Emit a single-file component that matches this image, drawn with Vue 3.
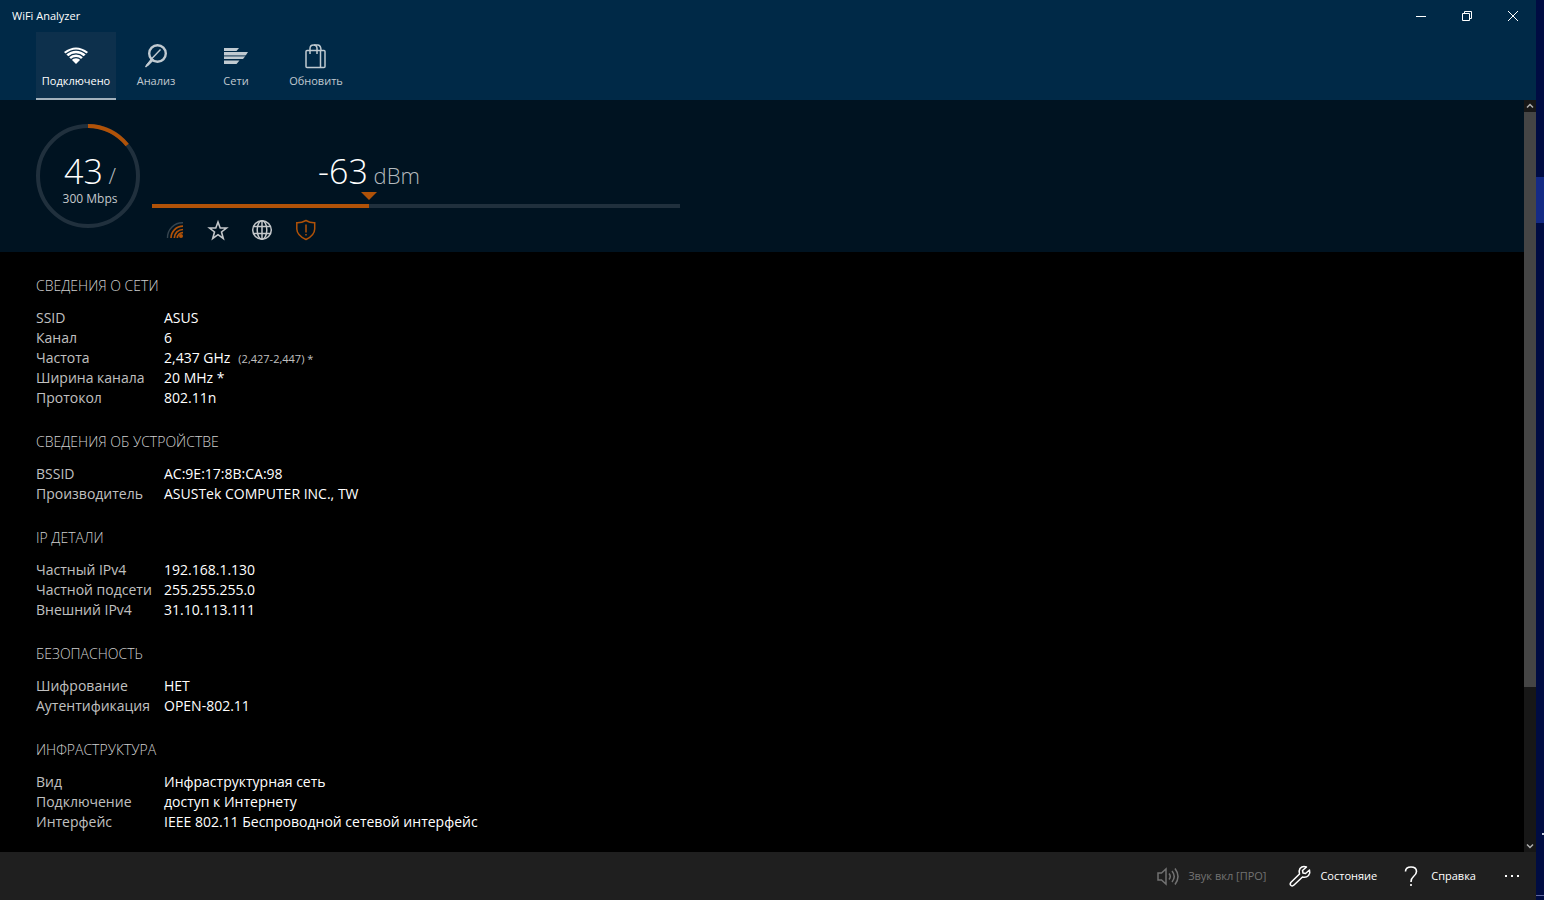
<template>
  <div class="desktop">
    <div class="window">
      <header class="header">
        <div class="title-bar">
          <h1 class="app-title">WiFi Analyzer</h1>
          <div class="window-controls">
            <button type="button" aria-label="Свернуть">
              <svg width="10" height="10" viewBox="0 0 10 10"><path d="M0 5.5h10" /></svg>
            </button>
            <button type="button" aria-label="Восстановить">
              <svg width="10" height="10" viewBox="0 0 10 10">
                <path d="M.5 2.5h7v7h-7zM2.5 2.5v-2h7v7h-2" />
              </svg>
            </button>
            <button type="button" aria-label="Закрыть">
              <svg width="10" height="10" viewBox="0 0 10 10"><path d="M0 0l10 10M10 0L0 10" /></svg>
            </button>
          </div>
        </div>

        <nav class="tabs">
          <button
            v-for="tab in tabs"
            :key="tab.id"
            type="button"
            class="tab"
            :class="{ active: tab.id === activeTab }"
            @click="activeTab = tab.id"
          >
            <svg v-if="tab.id === 'connected'" class="tab-icon" viewBox="0 0 28 28">
              <path d="M14 22L2 10Q14 1 26 10Z" fill="currentColor" />
              <g fill="none" stroke="#0d304c" stroke-width="1.3">
                <path d="M3.5 12.3Q14 3.8 24.5 12.3" />
                <path d="M6 15.2Q14 8.6 22 15.2" />
                <path d="M8.6 18Q14 13.4 19.4 18" />
              </g>
            </svg>
            <svg v-else-if="tab.id === 'analyze'" class="tab-icon" viewBox="0 0 28 28" fill="none" stroke="currentColor">
              <circle cx="15.5" cy="11.5" r="8.3" stroke-width="2.4" />
              <path d="M18.5 7.5L9 17.500" stroke-width="1.4" />
              <path d="M10 16.5L3.5 25L8 21L11.5 17.5" stroke-width="1.4" />
              <path d="M10.5 17.5L5 23.5" stroke-width="2" />
            </svg>
            <svg v-else-if="tab.id === 'networks'" class="tab-icon" viewBox="0 0 28 28" fill="currentColor">
              <path d="M2 6h15l-2.5 3H2z" />
              <path d="M2 10h24l-2 3H2z" />
              <path d="M2 14.5h21l-2 2.5H2z" />
              <path d="M2 18.5h15.5L14.5 22H2z" />
              <path d="M2 13h22l-1 1.5H2z" opacity=".45" />
            </svg>
            <svg v-else class="tab-icon" viewBox="0 0 28 28" fill="none" stroke="currentColor" stroke-width="1.5">
              <rect x="4" y="8.5" width="19" height="17" rx="1" />
              <path d="M18.5 8.5v17" />
              <path d="M8 12V6.5Q8 3 11.5 3T15 6.5V12" />
              <path d="M12 3h4Q19 3.500 19 8.5" />
            </svg>
            <span>{{ tab.label }}</span>
          </button>
        </nav>
      </header>

      <div class="body">
        <main class="content">
          <section class="signal-panel">
            <div class="speed">
              <svg class="speed-ring" viewBox="0 0 104 104" fill="none" stroke-width="4">
                <circle cx="52" cy="52" r="50" stroke="#20303d" />
                <circle
                  cx="52"
                  cy="52"
                  r="50"
                  stroke="#b05208"
                  pathLength="100"
                  :stroke-dasharray="`${speedPercent} 100`"
                  transform="rotate(-90 52 52)"
                />
              </svg>
              <div class="speed-text">
                <div class="speed-value">{{ speed }}<span class="unit"> /</span></div>
                <div class="speed-max">{{ maxSpeed }} Mbps</div>
              </div>
            </div>

            <div class="level">
              <div class="level-reading" :style="{ width: levelPercent * 2 + '%' }">
                {{ level }}<span class="unit"> dBm</span>
              </div>
              <div class="level-pointer" :style="{ width: levelPercent * 2 + '%' }">
                <svg width="16" height="8" viewBox="0 0 16 8"><path d="M0 0h16L8 8z" fill="#b05208" /></svg>
              </div>
              <div class="level-track">
                <div class="level-fill" :style="{ width: levelPercent + '%' }"></div>
              </div>
              <div class="badges">
                <svg viewBox="0 0 24 24" fill="none" stroke="#b05208" stroke-width="1.7">
                  <path d="M5.5 20A15 15 0 0 1 21 4.8" stroke="#34444f" stroke-width="1.4" />
                  <path d="M9 20A12 12 0 0 1 21 8.2" />
                  <path d="M12.3 20A8.7 8.7 0 0 1 21 11.5" />
                  <path d="M15.3 20A5.5 5.5 0 0 1 21 14.7" />
                  <circle cx="19" cy="18" r="2" fill="#b05208" stroke="none" />
                </svg>
                <svg viewBox="0 0 24 24" fill="none" stroke="#c4c8cb" stroke-width="1.6">
                  <path d="M12 4l2.200 6h6.300l-5 4 1.800 6.500-5.300-3.800-5.300 3.800 1.800-6.500-5-4h6.300z" />
                </svg>
                <svg viewBox="0 0 24 24" fill="none" stroke="#c4c8cb" stroke-width="1.5">
                  <circle cx="12" cy="12" r="9.3" />
                  <ellipse cx="12" cy="12" rx="4.8" ry="9.3" />
                  <path d="M12 2.7v18.6M3.5 8.5h17M3.5 15.5h17" />
                </svg>
                <svg viewBox="0 0 24 24" fill="none" stroke="#b05208" stroke-width="1.5">
                  <path d="M12 2.5Q7.5 5 2.8 4.8V11Q3 17.5 12 21.5Q20.5 17.5 20.700 11V4.800Q16 5 12 2.5z" />
                  <path d="M12 6.5v8M12 16v1.5" />
                </svg>
              </div>
            </div>
          </section>

          <div class="details">
            <section v-for="group in groups" :key="group.title" class="group">
              <h2>{{ group.title }}</h2>
              <dl>
                <template v-for="row in group.rows" :key="row.label">
                  <dt>{{ row.label }}</dt>
                  <dd>{{ row.value }}<small v-if="row.note">{{ row.note }}</small></dd>
                </template>
              </dl>
            </section>
          </div>
        </main>

        <div class="scrollbar">
          <button type="button" aria-label="Вверх">
            <svg width="8" height="6" viewBox="0 0 8 6"><path d="M1 4.5l3-3 3 3" /></svg>
          </button>
          <div class="scroll-track">
            <div class="scroll-thumb"></div>
          </div>
          <button type="button" aria-label="Вниз">
            <svg width="8" height="6" viewBox="0 0 8 6"><path d="M1 1.5l3 3 3-3" /></svg>
          </button>
        </div>
      </div>

      <footer class="command-bar">
        <button type="button" class="command" disabled>
          <svg viewBox="0 0 24 24" fill="none" stroke="currentColor" stroke-width="1.5">
            <path d="M2 9h3.5l4.5-4v15l-4.500-4H2z" />
            <path d="M13 9.5q2.500 3 0 6M16 7q4.500 5.500 0 11M19 4.500q6 8 0 16" />
          </svg>
          Звук вкл [ПРО]
        </button>
        <button type="button" class="command">
          <svg viewBox="0 0 24 24" fill="none" stroke="currentColor" stroke-width="1.5" stroke-linejoin="round">
            <path d="M18.5 3Q14.5 1.5 12 4.5Q10.5 7 11.5 10L2.800 18.500Q1.500 20.500 3 21.500Q4.500 22.500 6 21L14.500 13Q18 14 20.500 11.500Q22.500 9 21.500 6L17.500 9.500L15 9L14.500 6.500z" />
          </svg>
          Состоняие
        </button>
        <button type="button" class="command">
          <svg viewBox="0 0 24 24" fill="none" stroke="currentColor" stroke-width="1.6">
            <path d="M6.5 7.5Q6.5 3 12 3T17.5 7.5Q17.5 10 14.5 12.5Q12 14.5 12 18M12 20v2" />
          </svg>
          Справка
        </button>
        <button type="button" class="more" aria-label="Ещё">
          <svg width="14" height="2" viewBox="0 0 14 2" fill="currentColor">
            <path d="M0 0h2v2H0zM6 0h2v2H6zM12 0h2v2h-2z" />
          </svg>
        </button>
      </footer>
    </div>

    <div class="backdrop">
      <div class="backdrop-tile"></div>
      <div class="backdrop-mark"></div>
      <div class="backdrop-line"></div>
    </div>
  </div>
</template>

<script setup>
import { computed, ref } from 'vue'

const tabs = [
  { id: 'connected', label: 'Подключено' },
  { id: 'analyze', label: 'Анализ' },
  { id: 'networks', label: 'Сети' },
  { id: 'refresh', label: 'Обновить' }
]

const activeTab = ref('connected')

const speed = ref(43)
const maxSpeed = 300
const level = ref(-63)
const levelPercent = 41.1

const speedPercent = computed(() => (speed.value / maxSpeed) * 100)

const groups = [
  {
    title: 'СВЕДЕНИЯ О СЕТИ',
    rows: [
      { label: 'SSID', value: 'ASUS' },
      { label: 'Канал', value: '6' },
      { label: 'Частота', value: '2,437 GHz', note: '(2,427-2,447) *' },
      { label: 'Ширина канала', value: '20 MHz *' },
      { label: 'Протокол', value: '802.11n' }
    ]
  },
  {
    title: 'СВЕДЕНИЯ ОБ УСТРОЙСТВЕ',
    rows: [
      { label: 'BSSID', value: 'AC:9E:17:8B:CA:98' },
      { label: 'Производитель', value: 'ASUSTek COMPUTER INC., TW' }
    ]
  },
  {
    title: 'IP ДЕТАЛИ',
    rows: [
      { label: 'Частный IPv4', value: '192.168.1.130' },
      { label: 'Частной подсети', value: '255.255.255.0' },
      { label: 'Внешний IPv4', value: '31.10.113.111' }
    ]
  },
  {
    title: 'БЕЗОПАСНОСТЬ',
    rows: [
      { label: 'Шифрование', value: 'НЕТ' },
      { label: 'Аутентификация', value: 'OPEN-802.11' }
    ]
  },
  {
    title: 'ИНФРАСТРУКТУРА',
    rows: [
      { label: 'Вид', value: 'Инфраструктурная сеть' },
      { label: 'Подключение', value: 'доступ к Интернету' },
      { label: 'Интерфейс', value: 'IEEE 802.11 Беспроводной сетевой интерфейс' }
    ]
  }
]
</script>

<style>
body {
  background: #000;
}
</style>

<style scoped>
.desktop {
  display: flex;
  min-height: 100vh;
  font-family: 'Open Sans', 'Noto Sans', sans-serif;
  font-size: 14px;
  line-height: 20px;
  color: #fff;
  background: #000;
}

button {
  padding: 0;
  border: 0;
  background: none;
  color: inherit;
  font: inherit;
}

.window {
  flex: 1;
  min-width: 0;
  display: flex;
  flex-direction: column;
}

/* Header */
.header {
  background: #002947;
}

.title-bar {
  display: flex;
  justify-content: space-between;
  align-items: center;
  height: 32px;
  padding-left: 12px;
}

.app-title {
  margin: 0;
  font-size: 11px;
  font-weight: 400;
}

.window-controls {
  display: flex;
}

.window-controls button {
  display: flex;
  justify-content: center;
  align-items: center;
  width: 46px;
  height: 32px;
}

.window-controls svg {
  fill: none;
  stroke: #fff;
}

.tabs {
  display: flex;
  padding-left: 36px;
}

.tab {
  display: flex;
  flex-direction: column;
  align-items: center;
  width: 80px;
  height: 68px;
  padding-top: 10px;
  border-bottom: 2px solid transparent;
  color: #c0cad1;
  font-size: 11px;
  line-height: 22px;
}

.tab.active {
  background: #0d304c;
  border-bottom-color: #a3b1bc;
  color: #fff;
}

.tab-icon {
  width: 28px;
  height: 28px;
}

/* Signal */
.body {
  flex: 1;
  display: flex;
}

.content {
  flex: 1;
  min-width: 0;
}

.signal-panel {
  display: flex;
  gap: 12px;
  padding: 24px 36px 0;
  background: #001321;
}

.speed {
  display: grid;
  width: 104px;
  height: 104px;
}

.speed-ring,
.speed-text {
  grid-area: 1 / 1;
}

.speed-text {
  padding: 32px 0 0 4px;
  text-align: center;
}

.speed-value,
.level-reading {
  font-size: 34px;
  font-weight: 300;
}

.speed-value {
  line-height: 30px;
}

.unit {
  color: #b4babe;
  font-size: 22px;
}

.speed-max {
  color: #c4c8cb;
  font-size: 12px;
  line-height: 18px;
}

.level {
  flex: 1;
  max-width: 528px;
  padding-top: 28px;
}

.level-reading {
  height: 40px;
  line-height: 38px;
  text-align: center;
  white-space: nowrap;
}

.level-pointer {
  display: flex;
  justify-content: center;
  height: 12px;
}

.level-track {
  height: 4px;
  background: #20303d;
}

.level-fill {
  height: 100%;
  background: #b05208;
}

.badges {
  display: flex;
  gap: 20px;
  padding: 10px;
}

.badges svg {
  width: 24px;
  height: 24px;
}

/* Details */
.details {
  display: flex;
  flex-direction: column;
  gap: 24px;
  padding: 24px 36px 16px;
}

.group h2 {
  margin: 0 0 12px;
  color: #d0d0d0;
  font-size: 14px;
  font-weight: 300;
}

.group dl {
  display: grid;
  grid-template-columns: 128px 1fr;
  margin: 0;
}

.group dt {
  color: #c0c0c0;
  white-space: nowrap;
}

.group dd {
  margin: 0;
}

.group small {
  margin-left: 8px;
  color: #c0c0c0;
  font-size: 11px;
  line-height: 16px;
}

/* Scrollbar */
.scrollbar {
  display: flex;
  flex-direction: column;
  width: 12px;
  background: #171717;
}

.scrollbar button {
  display: flex;
  justify-content: center;
  align-items: center;
  height: 12px;
}

.scrollbar svg {
  fill: none;
  stroke: #b0b0b0;
  stroke-width: 1.5;
}

.scroll-track {
  flex: 1;
}

.scroll-thumb {
  height: 79%;
  background: #454545;
}

/* Command bar */
.command-bar {
  display: flex;
  justify-content: flex-end;
  align-items: center;
  gap: 22px;
  height: 48px;
  padding-right: 10px;
  background: #1f1f1f;
}

.command {
  display: flex;
  align-items: center;
  gap: 8px;
  font-size: 11px;
}

.command:disabled {
  color: #727272;
}

.command svg {
  width: 24px;
  height: 24px;
}

.more {
  display: flex;
  justify-content: center;
  width: 28px;
}

/* Desktop strip beside the window */
.backdrop {
  display: flex;
  flex-direction: column;
  width: 8px;
  padding-top: 177px;
  background: #000c42;
}

.backdrop-tile {
  height: 46px;
  background: #142a85;
}

.backdrop-mark {
  align-self: flex-end;
  width: 2px;
  height: 2px;
  margin-top: auto;
  background: #c8cce0;
}

.backdrop-line {
  height: 1px;
  margin: 60px 0 4px;
  background: #6068a0;
}
</style>
